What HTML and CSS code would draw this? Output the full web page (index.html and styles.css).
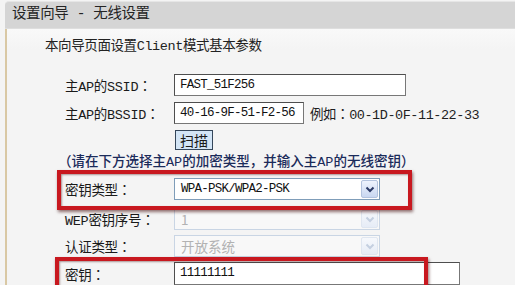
FILE: index.html
```html
<!DOCTYPE html>
<html lang="zh-CN">
<head>
<meta charset="utf-8">
<title>设置向导 - 无线设置</title>
<link rel="stylesheet" href="styles.css">
</head>
<body>
<div class="window">
  <div class="titlebar">设置向导 - 无线设置</div>
  <div class="body">
    <p class="intro">本向导页面设置Client模式基本参数</p>
    <div class="form">
      <div class="row r-ssid">
        <label class="lbl">主AP的SSID：</label>
        <div class="input w-ssid">FAST_51F256</div>
      </div>
      <div class="row r-bssid">
        <label class="lbl">主AP的BSSID：</label>
        <div class="input w-bssid">40-16-9F-51-F2-56</div>
        <span class="hint">例如：00-1D-0F-11-22-33</span>
      </div>
      <div class="row r-scan">
        <span class="lbl"></span>
        <button class="btn" type="button">扫描</button>
      </div>
      <p class="note">（请在下方选择主AP的加密类型，并输入主AP的无线密钥）</p>
      <div class="row r-type">
        <label class="lbl">密钥类型：</label>
        <div class="select">
          <span class="sel-text">WPA-PSK/WPA2-PSK</span>
          <span class="sel-btn"><svg width="10" height="7" viewBox="0 0 10 7"><polyline points="1.5,1.5 5,5 8.5,1.5" fill="none" stroke="#2b3a66" stroke-width="2"/></svg></span>
        </div>
      </div>
      <div class="row r-wep">
        <label class="lbl">WEP密钥序号：</label>
        <div class="select disabled">
          <span class="sel-text">1</span>
          <span class="sel-btn"><svg width="10" height="7" viewBox="0 0 10 7"><polyline points="1.5,1.5 5,5 8.5,1.5" fill="none" stroke="#c4cfe0" stroke-width="2"/></svg></span>
        </div>
      </div>
      <div class="row r-auth">
        <label class="lbl">认证类型：</label>
        <div class="select disabled">
          <span class="sel-text">开放系统</span>
          <span class="sel-btn"><svg width="10" height="7" viewBox="0 0 10 7"><polyline points="1.5,1.5 5,5 8.5,1.5" fill="none" stroke="#c4cfe0" stroke-width="2"/></svg></span>
        </div>
      </div>
      <div class="row r-key">
        <label class="lbl">密钥：</label>
        <div class="input w-key">11111111</div>
      </div>
    </div>
    <div class="hilite hl-1"></div>
    <div class="hilite hl-2"></div>
  </div>
</div>
</body>
</html>
```
FILE: styles.css
```css
html, body {
  margin: 0;
  padding: 0;
  background: #f4f4f4;
  overflow: hidden;
}
body {
  width: 515px;
  height: 285px;
  font-family: "Liberation Mono", "Noto Sans CJK SC", monospace;
  font-size: 13.5px;
  color: #1e1e1e;
}
.window {
  margin-left: 5px;
}
.titlebar {
  box-sizing: border-box;
  height: 28px;
  margin-top: 1px;
  border-top: 1px solid #e6e6e6;
  border-bottom: 1px solid #dedede;
  border-top-left-radius: 4px;
  background: #d5d5d5;
  padding-left: 7px;
  line-height: 25px;
  font-family: "Liberation Mono", "Noto Sans CJK SC", monospace;
  font-size: 14.5px;
  letter-spacing: -0.4px;
  color: #242424;
}
.body {
  position: relative;
  height: 257px;
  border-left: 2px solid #d9c8a4;
  background: linear-gradient(#f9f9f9, #f4f4f4 20px);
  padding-top: 9px;
  box-sizing: border-box;
}
.intro {
  margin: 0 0 0 38px;
  height: 18px;
  line-height: 18px;
  letter-spacing: -0.4px;
  color: #222;
}
.form {
  display: flex;
  flex-direction: column;
  padding-left: 58px;
}
.row {
  display: flex;
  align-items: center;
  height: 22px;
}
.lbl {
  width: 109px;
  flex: none;
  font-family: "Liberation Mono", "Noto Sans CJK TC", monospace;
  font-feature-settings: "locl" 0;
  letter-spacing: -0.3px;
  color: #1a1a1a;
}
.r-ssid { margin-top: 18px; }
.r-bssid { margin-top: 6px; }
.r-scan { margin-top: 6px; height: 20px; }
.r-type { margin-top: 7px; }
.r-wep { margin-top: 8px; }
.r-auth { margin-top: 5px; }
.r-key { margin-top: 5px; height: 23px; }

.input {
  height: 100%;
  box-sizing: border-box;
  border: 1px solid #4e4e4e;
  border-right-color: #777;
  border-bottom-color: #777;
  background: #fff;
  padding-left: 5px;
  line-height: 20px;
  font-size: 12.5px;
  letter-spacing: -0.75px;
  color: #111;
}
.w-ssid { width: 232px; }
.w-bssid { width: 130px; }
.w-key { width: 286px; }
.hint {
  margin-left: 6px;
  font-family: "Liberation Mono", "Noto Sans CJK TC", monospace;
  font-feature-settings: "locl" 0;
  letter-spacing: -0.45px;
  font-size: 13.5px;
}
.btn {
  margin-left: 1px;
  width: 38px;
  height: 20px;
  padding: 0;
  border: 1px solid #34465a;
  background: #d3e5f6;
  font-family: "Noto Sans CJK SC", sans-serif;
  font-size: 14px;
  line-height: 18px;
  color: #1a1a1a;
}
.note {
  margin: 5px 0 0 -7px;
  height: 16px;
  line-height: 16px;
  color: #1b2b5a;
  font-weight: 500;
  font-size: 13.5px;
}
.select {
  width: 206px;
  height: 100%;
  box-sizing: border-box;
  border: 1px solid #7f9db9;
  background: #fff;
  display: flex;
  align-items: center;
  justify-content: space-between;
  padding: 1px;
}
.sel-text {
  padding-left: 5px;
  font-size: 12.5px;
  letter-spacing: -0.75px;
  color: #111;
}
.sel-btn {
  width: 17px;
  height: 100%;
  box-sizing: border-box;
  border: 1px solid #b3c3de;
  border-radius: 2px;
  background: linear-gradient(#eef3fd, #c9d7f1);
  display: flex;
  align-items: center;
  justify-content: center;
}
.select.disabled {
  border-color: #c9d5e4;
  background: #f8f8f8;
}
.select.disabled .sel-text {
  color: #b2b2b2;
  font-family: "Noto Sans CJK SC", sans-serif;
  font-size: 13.5px;
  letter-spacing: 0;
}
.select.disabled .sel-btn {
  border-color: #dfe6f0;
  background: linear-gradient(#f6f8fc, #e6ecf6);
}
.hilite {
  position: absolute;
  border: 4px solid #c8181f;
  box-shadow: 1px 2px 3px rgba(60, 0, 0, 0.55), inset 1px 1px 2px rgba(60, 0, 0, 0.4);
  box-sizing: border-box;
  pointer-events: none;
}
.hl-1 {
  left: 50px;
  top: 141px;
  width: 355px;
  height: 40px;
}
.hl-2 {
  left: 48px;
  top: 228px;
  width: 373px;
  height: 40px;
}
```
